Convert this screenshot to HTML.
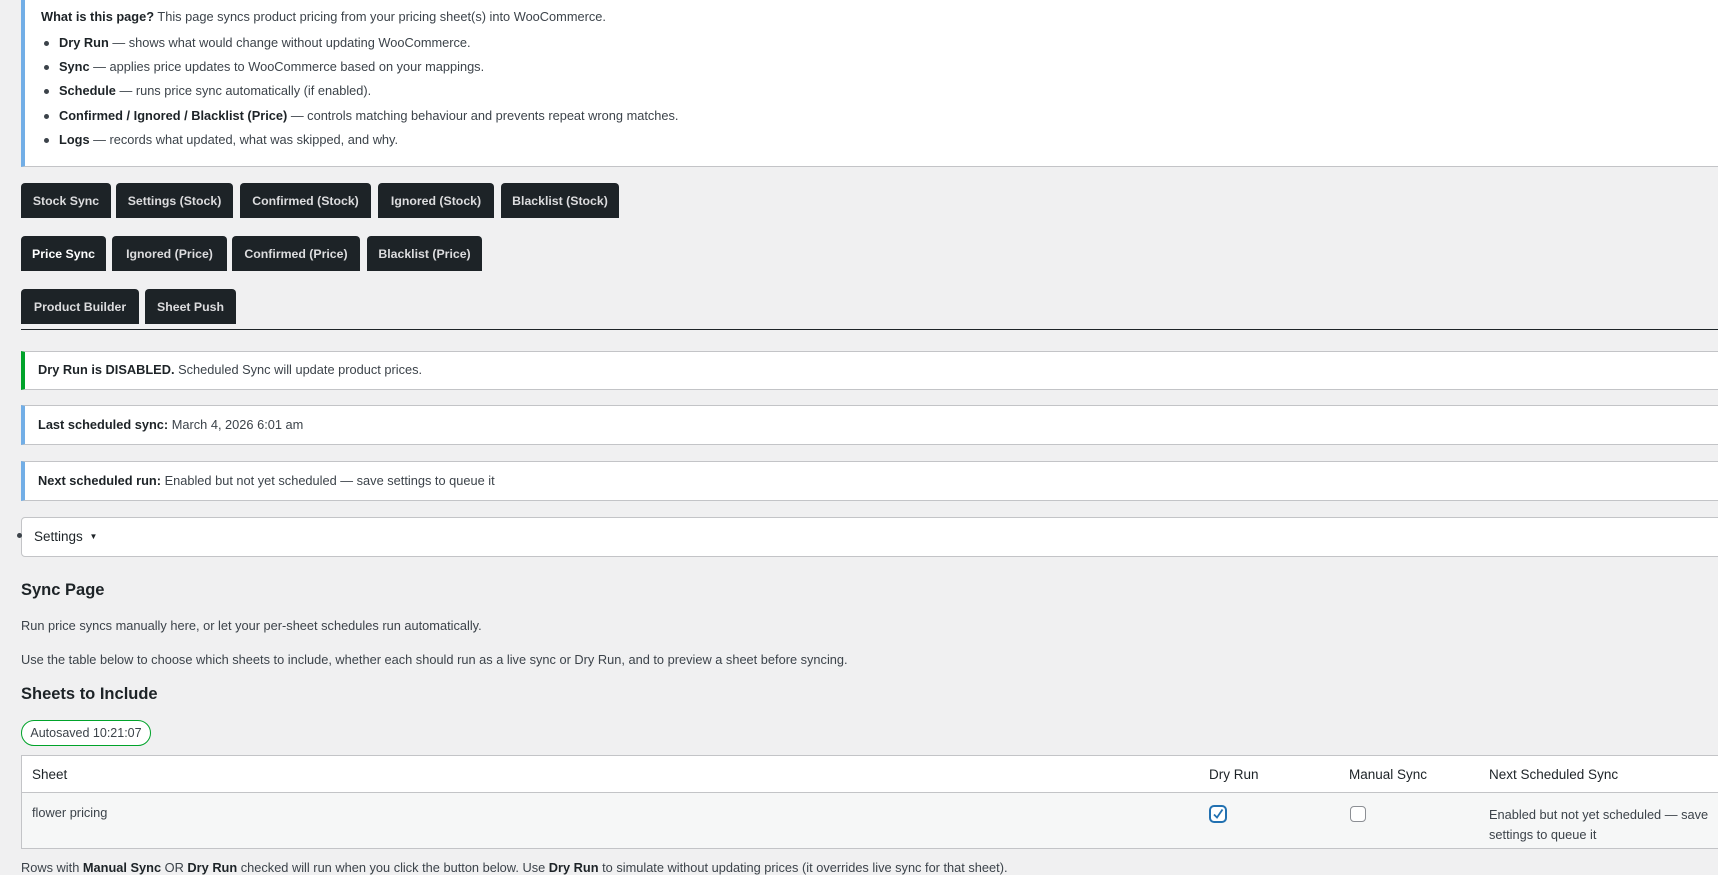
<!DOCTYPE html>
<html><head><meta charset="utf-8"><style>
body{margin:0;background:#f0f0f1;font-family:"Liberation Sans",sans-serif;font-size:12.8px;color:#3c434a;width:1718px;height:871px;overflow:hidden;position:relative}
.abs{position:absolute}
.box{position:absolute;left:21px;width:1720px;background:#fff;border:1px solid #c3c4c7;box-sizing:border-box}
.info{top:-2px;height:169px;border-left:4px solid #72aee6;border-top:none}
.info p{margin:0;position:absolute;left:16px;top:11px}
.info li{position:absolute;left:34px}
.info li::before{content:"";position:absolute;left-0:0;left:-15px;top:6px;width:5px;height:5px;border-radius:50%;background:#3c434a}
b{color:#1d2327;font-weight:bold}
.btn{position:absolute;height:35px;background:#1d2327;color:#dcdcde;font-weight:bold;font-size:12.3px;line-height:36px;text-align:center;border-radius:4px 4px 0 0;box-sizing:border-box}
.n{border-left:4px solid #72aee6;line-height:36px;padding-left:13px}
.g{border-left-color:#00a32a}
h2{position:absolute;margin:0;font-size:16.5px;font-weight:600;color:#1d2327;left:21px}
</style></head><body>
<div class="box info">
<p><b>What is this page?</b> This page syncs product pricing from your pricing sheet(s) into WooCommerce.</p>
<ul style="margin:0;padding:0;list-style:none">
<li style="top:37px"><b>Dry Run</b> — shows what would change without updating WooCommerce.</li>
<li style="top:61px"><b>Sync</b> — applies price updates to WooCommerce based on your mappings.</li>
<li style="top:85px"><b>Schedule</b> — runs price sync automatically (if enabled).</li>
<li style="top:110px"><b>Confirmed / Ignored / Blacklist (Price)</b> — controls matching behaviour and prevents repeat wrong matches.</li>
<li style="top:134px"><b>Logs</b> — records what updated, what was skipped, and why.</li>
</ul></div>
<div class="btn" style="top:183px;left:21px;width:90px">Stock Sync</div>
<div class="btn" style="top:183px;left:116px;width:117px">Settings (Stock)</div>
<div class="btn" style="top:183px;left:240px;width:131px">Confirmed (Stock)</div>
<div class="btn" style="top:183px;left:378px;width:116px">Ignored (Stock)</div>
<div class="btn" style="top:183px;left:501px;width:118px">Blacklist (Stock)</div>
<div class="btn" style="top:236px;left:21px;width:85px;color:#fff">Price Sync</div>
<div class="btn" style="top:236px;left:112px;width:115px">Ignored (Price)</div>
<div class="btn" style="top:236px;left:232px;width:128px">Confirmed (Price)</div>
<div class="btn" style="top:236px;left:367px;width:115px">Blacklist (Price)</div>
<div class="btn" style="top:289px;left:21px;width:118px">Product Builder</div>
<div class="btn" style="top:289px;left:145px;width:91px">Sheet Push</div>
<div class="abs" style="top:329px;left:21px;width:1700px;height:1px;background:#1d2327"></div>
<div class="box n g" style="top:351px;height:39px"><b>Dry Run is DISABLED.</b> Scheduled Sync will update product prices.</div>
<div class="box n" style="top:405px;height:40px;line-height:38px"><b>Last scheduled sync:</b> March 4, 2026 6:01 am</div>
<div class="box n" style="top:461px;height:40px;line-height:38px"><b>Next scheduled run:</b> Enabled but not yet scheduled — save settings to queue it</div>
<div class="box" style="top:517px;height:40px;border-radius:4px;line-height:38px;padding-left:12px;color:#1d2327;font-size:13.5px">Settings <span style="font-size:8px;vertical-align:2px;margin-left:3px">▼</span></div>
<div class="abs" style="left:17px;top:533px;width:5px;height:5px;border-radius:50%;background:#3c434a"></div>
<h2 style="top:581px">Sync Page</h2>
<div class="abs" style="left:21px;top:618px">Run price syncs manually here, or let your per-sheet schedules run automatically.</div>
<div class="abs" style="left:21px;top:652px">Use the table below to choose which sheets to include, whether each should run as a live sync or Dry Run, and to preview a sheet before syncing.</div>
<h2 style="top:685px">Sheets to Include</h2>
<div class="abs" style="left:21px;top:720px;width:130px;height:26px;border:1px solid #00a32a;border-radius:13px;box-sizing:border-box;line-height:24px;text-align:center;font-size:12.5px;background:#fff">Autosaved 10:21:07</div>
<div class="box" style="top:755px;height:94px">
<div class="abs" style="left:0;top:36px;width:100%;height:1px;background:#c3c4c7"></div>
<div class="abs" style="left:0;top:37px;width:100%;height:55px;background:#f6f7f7"></div>
<div class="abs" style="left:10px;top:11px;color:#1d2327;font-size:13.5px">Sheet</div>
<div class="abs" style="left:1187px;top:11px;color:#1d2327;font-size:13.5px">Dry Run</div>
<div class="abs" style="left:1327px;top:11px;color:#1d2327;font-size:13.5px">Manual Sync</div>
<div class="abs" style="left:1467px;top:11px;color:#1d2327;font-size:13.5px">Next Scheduled Sync</div>
<div class="abs" style="left:10px;top:49px">flower pricing</div>
<div class="abs" style="left:1188px;top:50px;width:16px;height:16px;border:1px solid #2271b1;border-radius:4px;box-sizing:border-box;background:#fff;box-shadow:0 0 0 1px #2271b1"><svg width="14" height="14" viewBox="0 0 14 14" style="position:absolute;left:0;top:0"><path d="M3 7.5L6 10.5L11.5 2.5" fill="none" stroke="#2271b1" stroke-width="1.8"/></svg></div>
<div class="abs" style="left:1328px;top:50px;width:16px;height:16px;border:1px solid #8c8f94;border-radius:4px;box-sizing:border-box;background:#fff"></div>
<div class="abs" style="left:1467px;top:49px;line-height:20px;width:230px">Enabled but not yet scheduled — save settings to queue it</div>
</div>
<div class="abs" style="left:21px;top:860px">Rows with <b>Manual Sync</b> OR <b>Dry Run</b> checked will run when you click the button below. Use <b>Dry Run</b> to simulate without updating prices (it overrides live sync for that sheet).</div>
</body></html>
